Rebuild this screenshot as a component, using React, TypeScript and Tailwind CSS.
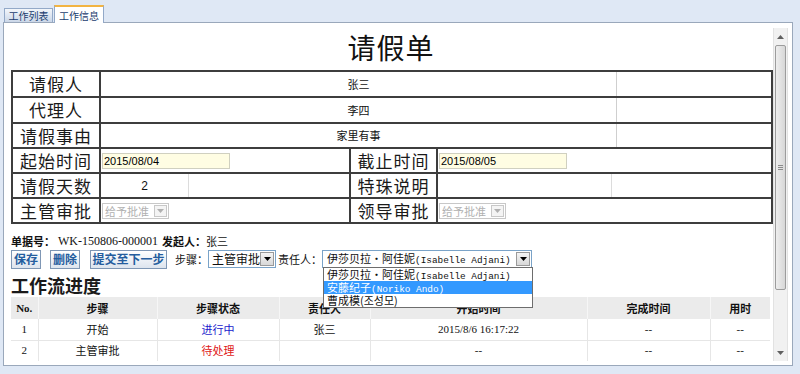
import React from 'react'

const cjk = "font-['Noto_Sans_CJK_SC','Noto_Sans_CJK_KR',sans-serif]"
const serif = "font-['Liberation_Serif','Noto_Sans_CJK_SC',serif]"

function Arrow({ className = '' }: { className?: string }) {
  return (
    <svg width="7" height="4" viewBox="0 0 7 4" className={className}>
      <polygon points="0,0 7,0 3.5,4" fill="currentColor" />
    </svg>
  )
}

function Label({ text, w }: { text: string; w: string }) {
  return (
    <div className={`${w} flex items-center justify-center text-[17px] text-[#1a1a1a] tracking-[1px] ${cjk}`}>
      {text}
    </div>
  )
}

function DateInput({ value }: { value: string }) {
  return (
    <div className="ml-[1px] w-[128px] h-[16px] border border-[#d0d0c0] bg-[#fffde3] text-[11px] leading-[14px] pl-[1px] text-black font-['Liberation_Sans',sans-serif]">
      {value}
    </div>
  )
}

function DisabledSelect() {
  return (
    <div className={`ml-[1px] w-[67px] h-[16px] border border-[#c8c8c8] bg-white flex items-center text-[11px] text-[#b0b0b0] ${cjk}`}>
      <span className="flex-1 pl-[2px] leading-[14px]">给予批准</span>
      <span className="w-[13px] h-[12px] mr-[1px] border border-[#c8c8c8] bg-[#f4f4f4] flex items-center justify-center text-[#b0b0b0]">
        <Arrow />
      </span>
    </div>
  )
}

function Btn({ text, w }: { text: string; w: string }) {
  return (
    <div className={`${w} h-[19px] border border-[#7f97b5] bg-gradient-to-b from-white to-[#dde4ee] flex items-center justify-center text-[12px] font-bold text-[#245d9e] ${cjk}`}>
      {text}
    </div>
  )
}

const people = [
  { cn: '伊莎贝拉·阿佳妮', en: '(Isabelle Adjani)' },
  { cn: '安藤纪子', en: '(Noriko Ando)' },
  { cn: '曹成模', en: '(조성모)' },
]

const flow = [
  { no: '1', step: '开始', status: '进行中', color: 'text-[#1a1acc]', who: '张三', start: '2015/8/6 16:17:22' },
  { no: '2', step: '主管审批', status: '待处理', color: 'text-[#e01818]', who: '', start: '--' },
]

export default function App() {
  return (
    <div className="w-[800px] h-[374px] overflow-hidden bg-[#dfe8f5] font-['Liberation_Sans','Noto_Sans_CJK_SC',sans-serif]">
      {/* tabs */}
      <div className="h-[22px] flex items-end pl-[4px] relative z-10">
        <div className={`w-[49px] h-[14px] border border-b-0 border-[#93a9c8] bg-gradient-to-b from-[#f3f6fb] to-[#cbd7e8] flex items-center justify-center text-[10px] text-[#1b3d6e] ${cjk}`}>
          工作列表
        </div>
        <div className={`w-[50px] h-[18px] -mb-[1px] ml-[1px] border border-b-0 border-[#93a9c8] border-t-2 border-t-[#f2b443] bg-white flex items-center justify-center text-[10px] text-[#1b3d6e] ${cjk}`}>
          工作信息
        </div>
      </div>

      {/* panel */}
      <div className="ml-[3px] w-[790px] h-[344px] border border-[#9aa8bb] bg-white flex pl-[5px] pr-[4px] pt-[5px] pb-[4px]">
        <div className="w-[764px] h-full overflow-hidden relative">
          <div className={`h-[42px] pt-[5px] text-center text-[28px] leading-[28px] text-[#111] tracking-[1px] ${cjk}`}>
            请假单
          </div>

          {/* form */}
          <div className="ml-[2px] w-[762px] border-2 border-[#3d3d3d]">
            {[
              ['请假人', '张三'],
              ['代理人', '李四'],
              ['请假事由', '家里有事'],
            ].map(([l, v], i) => (
              <div key={l} className={`flex ${i === 0 ? 'h-[24px]' : i === 1 ? 'h-[26px] border-t-2 border-[#3d3d3d]' : 'h-[25px] border-t-2 border-[#3d3d3d]'}`}>
                <Label text={l} w="w-[86px]" />
                <div className={`w-[517px] border-l-2 border-[#3d3d3d] flex items-center justify-center text-[11px] text-[#111] ${cjk}`}>
                  {v}
                </div>
                <div className="flex-1 border-l border-[#cfcfcf]" />
              </div>
            ))}

            <div className="flex h-[25px] border-t-2 border-[#3d3d3d]">
              <Label text="起始时间" w="w-[86px]" />
              <div className="w-[250px] border-l-2 border-[#3d3d3d] flex items-center">
                <DateInput value="2015/08/04" />
              </div>
              <Label text="截止时间" w="w-[87px] border-l-2 border-[#3d3d3d]" />
              <div className="flex-1 border-l-2 border-[#3d3d3d] flex items-center">
                <DateInput value="2015/08/05" />
              </div>
            </div>

            <div className="flex h-[25px] border-t-2 border-[#3d3d3d]">
              <Label text="请假天数" w="w-[86px]" />
              <div className="w-[250px] border-l-2 border-[#3d3d3d] flex">
                <div className="w-[88px] border-r border-[#dcdcdc] flex items-center justify-center text-[12px] text-[#111]">2</div>
              </div>
              <Label text="特珠说明" w="w-[87px] border-l-2 border-[#3d3d3d]" />
              <div className="flex-1 border-l-2 border-[#3d3d3d] flex">
                <div className="w-[174px] border-r border-[#dcdcdc]" />
              </div>
            </div>

            <div className="flex h-[25px] border-t-2 border-[#3d3d3d]">
              <Label text="主管审批" w="w-[86px]" />
              <div className="w-[250px] border-l-2 border-[#3d3d3d] flex items-center">
                <DisabledSelect />
              </div>
              <Label text="领导审批" w="w-[87px] border-l-2 border-[#3d3d3d]" />
              <div className="flex-1 border-l-2 border-[#3d3d3d] flex items-center">
                <DisabledSelect />
              </div>
            </div>
          </div>

          {/* info line */}
          <div className="mt-[11px] ml-[2px] h-[13px] flex items-center text-[11px] leading-[13px] text-[#111]">
            <span className={`font-bold ${cjk}`}>单据号：</span>
            <span className={`${serif} text-[12px] ml-[3px]`}>WK-150806-000001</span>
            <span className={`font-bold ml-[4px] ${cjk}`}>发起人：</span>
            <span className={cjk}>张三</span>
          </div>

          {/* actions */}
          <div className={`mt-[1px] ml-[2px] h-[20px] flex items-center text-[11px] text-[#111] ${cjk}`}>
            <Btn text="保存" w="w-[30px]" />
            <div className="ml-[9px]"><Btn text="删除" w="w-[30px]" /></div>
            <div className="ml-[10px]"><Btn text="提交至下一步" w="w-[77px]" /></div>
            <span className="ml-[8px] w-[33px]">步骤：</span>
            <div className="w-[68px] h-[18px] border border-[#7aa3c8] flex items-center">
              <span className="flex-1 pl-[3px] text-[12px] leading-[16px]">主管审批</span>
              <span className="w-[14px] h-[14px] mr-[1px] border border-[#9a9a9a] bg-gradient-to-b from-[#f4f4f4] to-[#d8d8d8] flex items-center justify-center text-black">
                <Arrow />
              </span>
            </div>
            <span className="ml-[2px] w-[44px]">责任人：</span>
            <div className="relative w-[210px] h-[18px] border border-[#7aa3c8] flex items-center">
              <span className="flex-1 pl-[4px] leading-[16px] whitespace-nowrap">
                <span className="text-[11px]">{people[0].cn}</span>
                <span className="text-[9.4px] font-['Liberation_Mono',monospace]">{people[0].en}</span>
              </span>
              <span className="w-[14px] h-[14px] mr-[1px] border border-[#9a9a9a] bg-gradient-to-b from-[#f4f4f4] to-[#d8d8d8] flex items-center justify-center text-black">
                <Arrow />
              </span>
              {/* open dropdown list */}
              <div className="absolute left-0 top-[16px] w-[210px] border border-[#6d6d6d] bg-white z-20">
                {people.map((p, i) => (
                  <div
                    key={p.cn}
                    className={`h-[13px] pl-[3px] leading-[13px] whitespace-nowrap ${i === 1 ? 'bg-[#3399ff] text-white' : 'text-[#111]'}`}
                  >
                    <span className="text-[11px]">{p.cn}</span>
                    <span className={i === 2 ? 'text-[11px]' : "text-[9.4px] font-['Liberation_Mono',monospace]"}>{p.en}</span>
                  </div>
                ))}
              </div>
            </div>
          </div>

          <div className={`mt-[4px] ml-[2px] h-[24px] leading-[24px] text-[18px] font-bold text-[#1a1a1a] ${cjk}`}>
            工作流进度
          </div>

          {/* workflow table */}
          <table className="ml-[2px] w-[759px] table-fixed border-collapse text-[11px] text-[#111]">
            <colgroup>
              <col className="w-[27px]" />
              <col className="w-[119px]" />
              <col className="w-[122px]" />
              <col className="w-[91px]" />
              <col className="w-[217px]" />
              <col className="w-[123px]" />
              <col className="w-[60px]" />
            </colgroup>
            <thead>
              <tr className="h-[22px] bg-[#ebebeb]">
                <th className={`border-r border-[#f6f6f6] ${serif}`}>No.</th>
                {['步骤', '步骤状态', '责任人', '开始时间', '完成时间', '用时'].map((h) => (
                  <th key={h} className={`border-r border-[#f6f6f6] last:border-r-0 font-bold ${cjk}`}>{h}</th>
                ))}
              </tr>
            </thead>
            <tbody>
              {flow.map((r) => (
                <tr key={r.no} className="h-[21px] border-b border-[#e6e6e6]">
                  <td className={`text-center border-r border-[#e6e6e6] ${serif}`}>{r.no}</td>
                  <td className={`text-center border-r border-[#e6e6e6] ${cjk}`}>{r.step}</td>
                  <td className={`text-center border-r border-[#e6e6e6] ${cjk} ${r.color}`}>{r.status}</td>
                  <td className={`text-center border-r border-[#e6e6e6] ${cjk}`}>{r.who}</td>
                  <td className={`text-center border-r border-[#e6e6e6] ${serif}`}>{r.start}</td>
                  <td className={`text-center border-r border-[#e6e6e6] ${serif}`}>--</td>
                  <td className={`text-center ${serif}`}>--</td>
                </tr>
              ))}
            </tbody>
          </table>
        </div>

        {/* scrollbar */}
        <div className="w-[15px] h-full bg-[#f1f1f1] border-x border-[#e2e2e2] flex flex-col">
          <div className="h-[17px] flex items-center justify-center text-[#606060]">
            <Arrow className="rotate-180" />
          </div>
          <div className="h-[245px] mx-[1px] border border-[#9c9c9c] rounded-[2px] bg-gradient-to-r from-[#eeeeee] to-[#d7d7d7] flex flex-col items-center justify-center gap-[1px]">
            <div className="w-[5px] h-px bg-[#8a8a8a]" />
            <div className="w-[5px] h-px bg-[#8a8a8a]" />
            <div className="w-[5px] h-px bg-[#8a8a8a]" />
          </div>
          <div className="flex-1" />
          <div className="h-[17px] flex items-center justify-center text-[#606060]">
            <Arrow />
          </div>
        </div>
      </div>
    </div>
  )
}
